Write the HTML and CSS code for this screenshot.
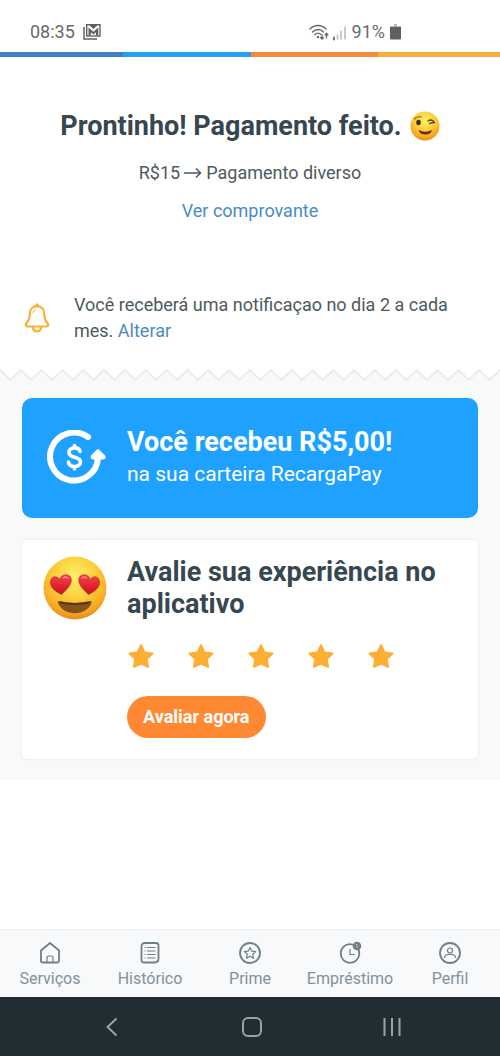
FILE: index.html
```html
<!DOCTYPE html>
<html lang="pt-BR">
<head>
<meta charset="utf-8">
<meta name="viewport" content="width=device-width, initial-scale=1">
<title>Pagamento feito</title>
<link rel="stylesheet" href="styles.css">
</head>
<body>
<svg class="defs" width="0" height="0" aria-hidden="true">
  <defs>
    <radialGradient id="face" cx="50%" cy="32%" r="68%">
      <stop offset="0" stop-color="#fff06a"/>
      <stop offset=".5" stop-color="#fdcf3b"/>
      <stop offset=".85" stop-color="#f6a623"/>
      <stop offset="1" stop-color="#e58b17"/>
    </radialGradient>
    <linearGradient id="heart" x1="0" y1="0" x2="0" y2="1">
      <stop offset="0" stop-color="#f8434a"/>
      <stop offset="1" stop-color="#c90f1c"/>
    </linearGradient>
    <symbol id="star" viewBox="0 0 28 26">
      <path d="M14 2.200l3.500 7.200 8 1.100-5.800 5.500 1.400 7.800-7.100-3.200-7.100 3.200 1.400-7.800-5.800-5.500 8-1.100z" fill="#fcaf32" stroke="#fcaf32" stroke-width="2" stroke-linejoin="round"/>
    </symbol>
  </defs>
</svg>
<div class="screen">
  <header class="status">
    <div class="status-side">
      <span>08:35</span>
      <svg width="18" height="16" viewBox="0 0 18 16" aria-hidden="true">
        <path d="M1 3v12h13" fill="none" stroke="#606060" stroke-width="1.500"/>
        <rect x="3.700" y=".7" width="13.300" height="11.300" fill="none" stroke="#606060" stroke-width="1.400"/>
        <path d="M5.500 11.500V3.500l4.900 4.300 4.900-4.300v8h-2.300V8.300l-2.600 2.300-2.600-2.300v3.200z" fill="#606060"/>
        <path d="M6 1l4.400 3.900L14.800 1z" fill="#606060"/>
      </svg>
    </div>
    <div class="status-side status-right">
      <svg width="38" height="17" viewBox="0 0 38 17" fill="none" stroke="#666" stroke-width="1.400" stroke-linecap="round" aria-hidden="true">
        <path d="M1 5c4.500-4.700 11.500-4.700 16 0M3.500 8c3.200-3.400 7.800-3.400 11 0M6 10.600c2-2 4.200-2 6 0"/>
        <circle cx="9" cy="13" r="1.200" fill="#666" stroke="none"/>
        <path d="M13 10.500v4.500m-1.500-1.500l1.500 1.700 1.500-1.700M17.500 14V9.500m-1.400 1.500l1.400-1.700 1.400 1.700" stroke-width="1.200"/>
        <path d="M25 13.500v2" stroke-width="1.800"/>
        <path d="M28.500 10.500v5M32 6.500v9M36 2.500v13" stroke="#c5c5c5" stroke-width="1.800" stroke-linecap="butt"/>
      </svg>
      <span>91%</span>
      <svg width="11" height="16" viewBox="0 0 11 16" aria-hidden="true">
        <path d="M4 0h3v2h4v2H0V2h4z" fill="#b5b5b5"/>
        <path d="M0 3h11v11.500a1 1 0 0 1-1 1H1a1 1 0 0 1-1-1z" fill="#606060"/>
      </svg>
    </div>
  </header>
  <div class="stripe"><i class="s1"></i><i class="s2"></i><i class="s3"></i><i class="s4"></i></div>

  <main class="main">
    <section class="result">
      <h1 class="title">Prontinho! Pagamento feito.
        <svg width="30" height="30" viewBox="0 0 60 60" role="img" aria-label="Piscadela">
          <circle cx="30" cy="30" r="29" fill="url(#face)"/>
          <path d="M9 16q6-7 14-4" fill="none" stroke="#a8701a" stroke-width="2.500" stroke-linecap="round"/>
          <ellipse cx="17" cy="23" rx="4.500" ry="5.500" fill="#402a12"/>
          <path d="M36 20q8-5 13 3-5 0-10 2" fill="none" stroke="#5a3a12" stroke-width="2.600" stroke-linecap="round" stroke-linejoin="round"/>
          <path d="M17 38q14 7 27 0-2 9-13 9-12 0-14-9z" fill="#6a2d10"/>
        </svg>
      </h1>
      <p class="detail">R$15
        <svg width="18" height="12" viewBox="0 0 18 12" fill="none" stroke="#4c5a60" stroke-width="1.500" role="img" aria-label="para"><path d="M0 6h16.500M12 1.500L16.500 6 12 10.500"/></svg>
        Pagamento diverso</p>
      <a class="link" href="#comprovante">Ver comprovante</a>
    </section>

    <section class="notice">
      <svg width="26" height="30" viewBox="0 0 26 30" fill="none" stroke="#fcaf32" stroke-width="2.200" stroke-linejoin="round" stroke-linecap="round" aria-hidden="true">
        <path d="M13 3.200c-4.800 0-7.200 3.500-7.200 7.600 0 5-1 7-3.300 9.300-1.300 1.500-.8 3.400 1.200 3.400h18.600c2 0 2.500-1.900 1.200-3.400-2.300-2.300-3.300-4.300-3.300-9.300 0-4.100-2.400-7.600-7.200-7.600z"/>
        <path d="M11.800 3l1.200-1.600L14.200 3M8.800 24c.4 2.900 2 4.300 4.200 4.300s3.800-1.400 4.200-4.300"/>
        <path d="M9 10q.3-2.700 2.400-3.700" stroke-width="1"/>
      </svg>
      <p class="notice-text">Você receberá uma notificaçao no dia 2 a cada mes. <a class="link" href="#alterar">Alterar</a></p>
    </section>

    <svg class="zigzag" viewBox="0 0 480 12" preserveAspectRatio="none" aria-hidden="true">
      <defs>
        <pattern id="teeth" width="20" height="12" patternUnits="userSpaceOnUse">
          <path d="M0 1L10 11 20 1V12H0z" fill="#f7f9fb"/>
          <path d="M-1 0L10 11 21 0" fill="none" stroke="#e9ebed" stroke-width="1.800"/>
        </pattern>
      </defs>
      <rect width="480" height="12" fill="url(#teeth)"/>
    </svg>

    <section class="cards">
      <article class="card cashback">
        <svg class="card-icon" width="60" height="56" viewBox="0 0 60 56" aria-hidden="true">
          <g fill="none" stroke="#fff" stroke-linecap="round" stroke-linejoin="round">
            <path d="M41 7A24 24 0 1 0 51 28" stroke-width="6"/>
            <path d="M51 22l-5 5h10z" fill="#fff" stroke-width="5"/>
            <path d="M33 21.500c-.5-2.500-2.500-3.600-5.500-3.600-3.300 0-5.500 1.700-5.500 4.500 0 6.300 11.500 3.300 11.500 9.400 0 3-2.500 4.700-6 4.700-3.400 0-5.700-1.600-6-4.500M27.500 15.500v2M27.500 37v2" stroke-width="3.600"/>
          </g>
        </svg>
        <div class="card-body">
          <h2 class="card-title">Você recebeu R$5,00!</h2>
          <p class="card-sub">na sua carteira RecargaPay</p>
        </div>
      </article>

      <article class="card rating">
        <svg class="card-icon" width="64" height="64" viewBox="0 0 64 64" role="img" aria-label="Rosto apaixonado">
          <circle cx="32" cy="32" r="31.500" fill="url(#face)"/>
          <path d="M16 45q16 4 31 0c2-.5 2 1.500 1 3.500C42 60 22 60 16 49c-1-2-2-4.500 0-4z" fill="#85531a"/>
          <path d="M17 46.500q15 3 29 0" fill="none" stroke="#5f3310" stroke-width="2"/>
          <path d="M18.500 38.500C13 36 7.500 32 7.300 26.500c-.2-6 6.500-8 9.300-3C18 18 26 17 28 22c2 5.500-4.500 12-9.500 16.500z" fill="url(#heart)" stroke="#b51b1b" stroke-width=".5"/>
          <path d="M45.500 38.500C51 36 56.500 32 56.700 26.500c.2-6-6.500-8-9.300-3C46 18 38 17 36 22c-2 5.500 4.500 12 9.500 16.500z" fill="url(#heart)" stroke="#b51b1b" stroke-width=".5"/>
          <path d="M20.500 22q2-2 4 0M39.500 22q2-2 4 0" fill="none" stroke="#ff8c88" stroke-width="1.500" stroke-linecap="round"/>
        </svg>
        <div class="card-body">
          <h2 class="card-title">Avalie sua experiência no aplicativo</h2>
          <div class="stars">
            <button class="star" type="button" aria-label="1 estrela"><svg width="28" height="26"><use href="#star"/></svg></button>
            <button class="star" type="button" aria-label="2 estrelas"><svg width="28" height="26"><use href="#star"/></svg></button>
            <button class="star" type="button" aria-label="3 estrelas"><svg width="28" height="26"><use href="#star"/></svg></button>
            <button class="star" type="button" aria-label="4 estrelas"><svg width="28" height="26"><use href="#star"/></svg></button>
            <button class="star" type="button" aria-label="5 estrelas"><svg width="28" height="26"><use href="#star"/></svg></button>
          </div>
          <button class="rate" type="button">Avaliar agora</button>
        </div>
      </article>
    </section>
  </main>

  <nav class="tabs">
    <a class="tab" href="#servicos">
      <svg class="tab-icon" viewBox="0 0 24 24"><path d="M3 9.500L12 2l9 7.500V20a1.500 1.500 0 0 1-1.500 1.500h-15A1.500 1.500 0 0 1 3 20z"/><path class="thin" d="M9 21v-4.500q0-1.500 1.500-1.500h3q1.500 0 1.500 1.500V21"/></svg>
      Serviços</a>
    <a class="tab" href="#historico">
      <svg class="tab-icon" viewBox="0 0 24 24"><path d="M7 2h11q2.500 0 2.500 2.500v13q0 4-4 4h-10.500q-2.500 0-2.500-2.500V5.500Q3.500 2 7 2z"/><path class="thin" d="M9 6.500h8.500M9 10h8.500M9 13.500h8.500M9 17h8.500M6.500 6.500h1M6.500 10h1M6.500 13.500h1M6.500 17h1"/></svg>
      Histórico</a>
    <a class="tab" href="#prime">
      <svg class="tab-icon" viewBox="0 0 24 24"><circle cx="12" cy="12" r="10"/><path class="thin" d="M12 6.500l1.700 3.600 3.900.5-2.900 2.700.8 3.900-3.500-1.900-3.500 1.900.8-3.900-2.900-2.700 3.900-.5z"/></svg>
      Prime</a>
    <a class="tab" href="#emprestimo">
      <svg class="tab-icon" viewBox="0 0 24 24"><circle cx="12" cy="12.500" r="9.300"/><path class="thin" d="M12 8v5.500h4.500"/><circle cx="19" cy="5" r="3.400" fill="#6f7f86"/><path d="M19.600 3.500q-1.800-.3-1.200 1 1.700.7 1 1.800l-1.200.1" stroke="#c5d0d6" stroke-width=".8"/></svg>
      Empréstimo</a>
    <a class="tab" href="#perfil">
      <svg class="tab-icon" viewBox="0 0 24 24"><circle cx="12" cy="12" r="10"/><circle class="thin" cx="12" cy="9.500" r="2.500"/><path class="thin" d="M6.500 17q0-3.500 3.500-3.500h4q3.500 0 3.500 3.500"/></svg>
      Perfil</a>
  </nav>

  <footer class="system">
    <button class="key" type="button" aria-label="Voltar"><svg width="20" height="20" viewBox="0 0 20 20"><path d="M14.500 1.500L5.500 10l9 8.500"/></svg></button>
    <button class="key" type="button" aria-label="Início"><svg width="20" height="20" viewBox="0 0 20 20"><rect x="1" y="1" width="18" height="18" rx="5"/></svg></button>
    <button class="key" type="button" aria-label="Recentes"><svg width="20" height="20" viewBox="0 0 20 20"><path d="M2.500 1v18M10 1v18M17.500 1v18"/></svg></button>
  </footer>
</div>
</body>
</html>
```

FILE: styles.css
```css
* { box-sizing: border-box; }

body {
  margin: 0;
  background: #fff;
  color: #4c5a60;
  font-family: Roboto, "Liberation Sans", sans-serif;
  font-size: 18px;
  line-height: 26px;
}

h1, h2, p { margin: 0; }

button {
  border: 0;
  padding: 0;
  background: none;
  font: inherit;
}

svg { flex: none; }

.defs { position: absolute; }

.screen {
  display: flex;
  flex-direction: column;
  min-height: 100vh;
}

.status {
  display: flex;
  justify-content: space-between;
  padding: 19px 99px 7px 30px;
  color: #6a6a6a;
}

.status-side {
  display: flex;
  align-items: center;
  gap: 8px;
}

.status-right { gap: 5px; }

.stripe {
  display: grid;
  grid-template-columns: 123fr 128fr 127fr 122fr;
  height: 5px;
}

.s1 { background: #3f7fc4; }
.s2 { background: #23a0f5; }
.s3 { background: #f68a36; }
.s4 { background: #f9ae3a; }

.result {
  display: flex;
  flex-direction: column;
  align-items: center;
  gap: 12px;
  padding: 52px 20px 68px;
  text-align: center;
}

.title {
  display: flex;
  align-items: center;
  gap: 8px;
  padding-bottom: 5px;
  color: #37474f;
  font-size: 27px;
  line-height: 34px;
}

.detail {
  display: flex;
  align-items: center;
  gap: 4px;
}

.link {
  color: #4b8bc2;
  text-decoration: none;
}

.notice {
  display: flex;
  align-items: center;
  gap: 24px;
  padding: 0 24px 25px;
}

.zigzag {
  display: block;
  width: 100%;
  height: 12px;
}

.cards {
  display: flex;
  flex-direction: column;
  gap: 22px;
  padding: 17px 22px 21px;
  background: #f7f9fb;
}

.card {
  display: flex;
  border-radius: 10px;
  padding: 16px 24px 21px 21px;
}

.card-icon { width: 64px; }

.card-body {
  flex: 1;
  padding-left: 20px;
}

.card-title {
  font-size: 27px;
  line-height: 32px;
}

.cashback {
  align-items: center;
  padding: 28px 20px 28px 25px;
  background: #1fa2ff;
  color: #fff;
}

.cashback .card-icon { width: 60px; }

.card-sub {
  font-size: 21px;
  line-height: 32px;
}

.rating {
  background: #fff;
  border-radius: 5px;
  box-shadow: 0 0 2px #d5dade;
  color: #37474f;
}

.stars {
  display: flex;
  gap: 32px;
  padding: 23px 0 27px;
}

.star {
  display: flex;
  cursor: pointer;
}

.rate {
  height: 42px;
  padding: 0 16px;
  border-radius: 21px;
  background: #ff8833;
  color: #fff;
  font-weight: 700;
}

.tabs {
  display: grid;
  grid-template-columns: repeat(5, 1fr);
  margin-top: auto;
  padding: 11px 0 6px;
  border-top: 1px solid #edf0f2;
  background: #f7f9fb;
}

.tab {
  display: flex;
  flex-direction: column;
  align-items: center;
  gap: 2px;
  color: #83919a;
  font-size: 16px;
  line-height: 24px;
  text-decoration: none;
}

.tab-icon {
  width: 24px;
  height: 24px;
  fill: none;
  stroke: #6f7f86;
  stroke-width: 1.8;
  stroke-linejoin: round;
}

.tab-icon .thin { stroke-width: 1.2; }

.system {
  display: flex;
  justify-content: center;
  gap: 120px;
  padding: 20px 0 19px 4px;
  background: #212d32;
}

.key {
  display: flex;
  fill: none;
  stroke: #9ba3a7;
  stroke-width: 2;
}
```
